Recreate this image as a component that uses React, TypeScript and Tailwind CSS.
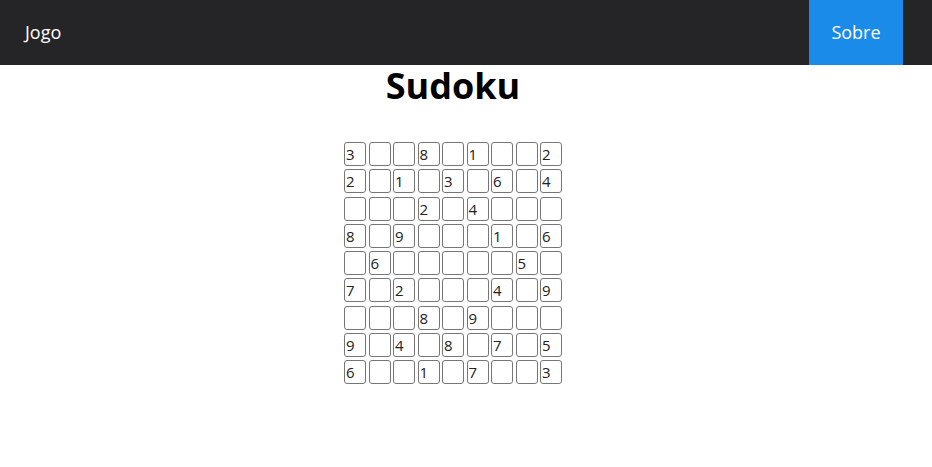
const board: (number | null)[][] = [
  [3, null, null, 8, null, 1, null, null, 2],
  [2, null, 1, null, 3, null, 6, null, 4],
  [null, null, null, 2, null, 4, null, null, null],
  [8, null, 9, null, null, null, 1, null, 6],
  [null, 6, null, null, null, null, null, 5, null],
  [7, null, 2, null, null, null, 4, null, 9],
  [null, null, null, 8, null, 9, null, null, null],
  [9, null, 4, null, 8, null, 7, null, 5],
  [6, null, null, 1, null, 7, null, null, 3],
];

export default function App() {
  return (
    <div className="min-h-[467px] bg-white font-['Open_Sans',sans-serif]">
      <nav className="h-[65px] bg-[#252527] flex items-stretch justify-between pr-[29px]">
        <a className="flex items-center pl-[25px] pb-[1px] text-[18px] text-white">Jogo</a>
        <a className="flex items-center justify-center w-[94px] bg-[#1a8be8] text-[18px] text-white">Sobre</a>
      </nav>
      <div className="w-[906px] flex flex-col items-center">
        <h1 className="text-[36px] font-bold text-black leading-[42px]">Sudoku</h1>
        <div className="mt-[35px] flex flex-col gap-[3.25px]">
          {board.map((row, r) => (
            <div key={r} className="flex gap-[2.5px]">
              {row.map((v, c) => (
                <div
                  key={c}
                  className="w-[22px] h-[24px] border border-[#767676] rounded-[3px] pl-[1px] text-[15px] leading-[22px] text-[#222]"
                >
                  {v ?? ''}
                </div>
              ))}
            </div>
          ))}
        </div>
      </div>
    </div>
  );
}
